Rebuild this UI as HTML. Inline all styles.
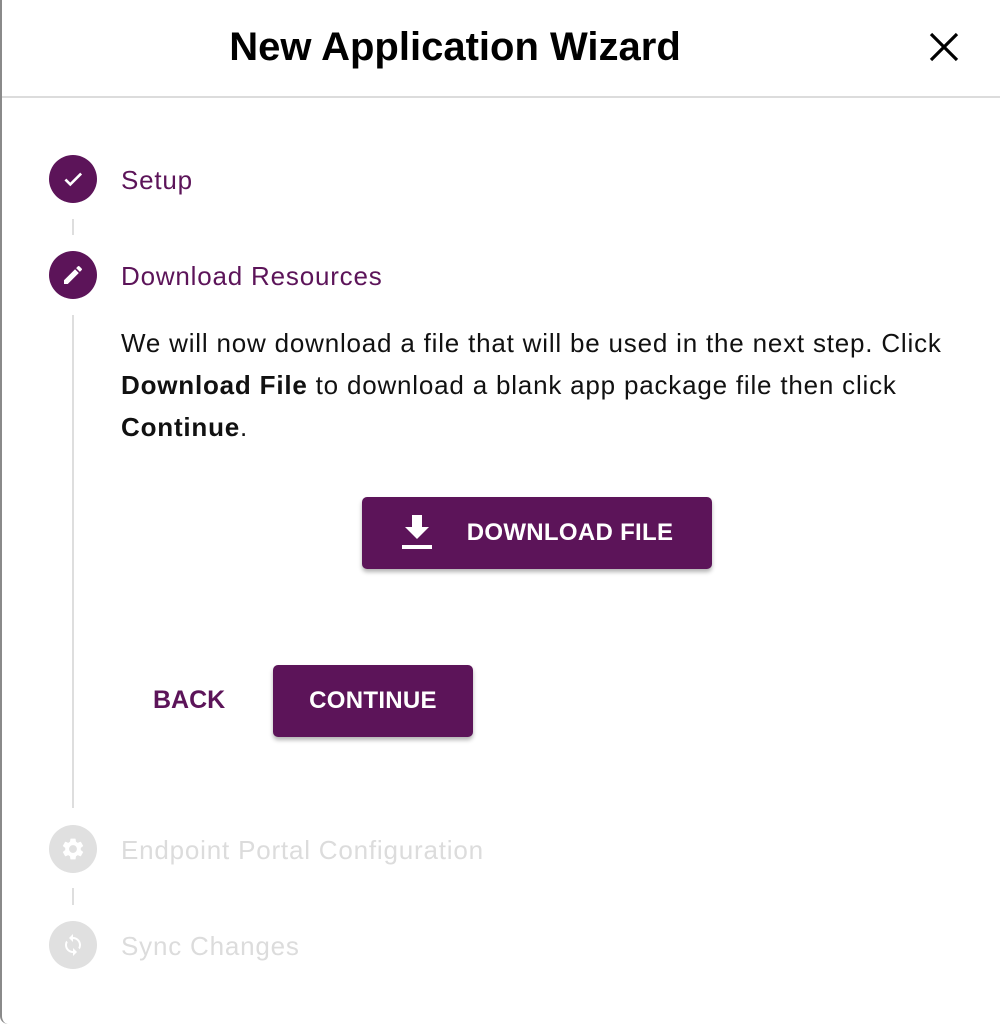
<!DOCTYPE html>
<html><head><style>
*{margin:0;padding:0;box-sizing:border-box}
body{width:1000px;height:1024px;background:#fff;font-family:"Liberation Sans",Roboto,sans-serif;position:relative;overflow:hidden}
.frame{position:absolute;left:0;top:0;width:1000px;height:1024px;border-left:2px solid #8a8a8a;border-bottom-left-radius:8px}
.title{position:absolute;left:0;width:910px;text-align:center;top:25px;font-size:40px;font-weight:bold;color:#000}
.hr{position:absolute;left:2px;right:0;top:96px;height:2px;background:#dcdcdc}
.circ{position:absolute;left:49px;width:48px;height:48px;border-radius:50%;background:#5c1459;display:flex;align-items:center;justify-content:center}
.circ.dis{background:#e0e0e0}
.lbl{position:absolute;left:121px;font-size:26px;letter-spacing:.8px;color:#5c1459}
.lbl.dis{color:#dcdcdc}
.vl{position:absolute;left:72px;width:2px;background:#dedede}
.txt{position:absolute;left:121px;top:322px;width:835px;font-size:26px;letter-spacing:.8px;line-height:42px;color:#111}
.btn{position:absolute;background:#5c1459;color:#fff;border-radius:5px;box-shadow:0 3px 4px rgba(0,0,0,.3);font-size:25px;font-weight:500;display:flex;align-items:center;justify-content:center;letter-spacing:.3px}
</style></head><body>
<div class="frame"></div>
<div class="title">New Application Wizard</div>
<svg style="position:absolute;left:929px;top:32px" width="30" height="30" viewBox="0 0 30 30"><path d="M2 2L28 28M28 2L2 28" stroke="#000" stroke-width="3.2"/></svg>
<div class="hr"></div>

<div class="circ" style="top:155px"><svg width="26" height="26" viewBox="0 0 24 24"><path d="M5 12.5l4.5 4.5L19.5 7" stroke="#fff" stroke-width="2.4" fill="none"/></svg></div>
<div class="lbl" style="top:165px">Setup</div>
<div class="vl" style="top:219px;height:16px"></div>

<div class="circ" style="top:251px"><svg width="24" height="24" viewBox="0 0 24 24"><path d="M3 17.25V21h3.75L17.81 9.94l-3.75-3.75L3 17.25zM20.71 7.04a1 1 0 000-1.41l-2.34-2.34a1 1 0 00-1.41 0l-1.83 1.83 3.75 3.75 1.83-1.83z" fill="#fff"/></svg></div>
<div class="lbl" style="top:261px">Download Resources</div>
<div class="vl" style="top:315px;height:493px"></div>

<div class="txt">We will now download a file that will be used in the next step. Click <b>Download File</b> to download a blank app package file then click <b>Continue</b>.</div>

<div class="btn" style="left:362px;top:497px;width:350px;height:72px;font-weight:bold;font-size:24px"><svg style="margin-right:34px" width="32" height="36" viewBox="0 0 32 36"><path d="M11 0h10v12h7L16 24 4 12h7z" fill="#fff"/><rect x="1" y="30" width="30" height="4" fill="#fff"/></svg>DOWNLOAD FILE</div>

<div style="position:absolute;left:153px;top:686px;font-size:25px;font-weight:bold;color:#5c1459">BACK</div>
<div class="btn" style="left:273px;top:665px;width:200px;height:72px;font-weight:bold;font-size:24px">CONTINUE</div>

<div class="circ dis" style="top:825px"><svg width="26" height="26" viewBox="0 0 24 24"><path fill="#fff" d="M19.14 12.94c.04-.3.06-.61.06-.94 0-.32-.02-.64-.07-.94l2.030-1.58a.49.49 0 00.12-.61l-1.92-3.32a.488.488 0 00-.59-.22l-2.39.96c-.5-.38-1.03-.7-1.62-.94l-.36-2.54a.484.484 0 00-.48-.41h-3.84c-.24 0-.43.17-.47.41l-.36 2.54c-.59.24-1.13.57-1.62.94l-2.39-.96c-.22-.08-.47 0-.59.22L2.74 8.87c-.12.21-.08.47.12.61l2.03 1.58c-.05.3-.09.63-.09.94s.02.64.07.94l-2.03 1.58a.49.49 0 00-.12.61l1.92 3.32c.12.22.37.29.59.22l2.39-.96c.5.38 1.03.7 1.62.94l.36 2.54c.05.24.24.41.48.41h3.84c.24 0 .44-.17.47-.41l.36-2.54c.59-.24 1.130-.56 1.62-.94l2.39.96c.22.08.47 0 .59-.22l1.92-3.32c.12-.22.07-.47-.12-.61l-2.01-1.58zM12 15.6c-1.98 0-3.6-1.62-3.6-3.6s1.62-3.6 3.6-3.6 3.6 1.62 3.6 3.6-1.62 3.6-3.6 3.6z"/></svg></div>
<div class="lbl dis" style="top:835px">Endpoint Portal Configuration</div>
<div class="vl" style="top:888px;height:17px"></div>

<div class="circ dis" style="top:921px"><svg width="24" height="24" viewBox="0 0 24 24"><path fill="#fff" d="M12 4V1L8 5l4 4V6c3.31 0 6 2.69 6 6 0 1.01-.25 1.970-.7 2.8l1.46 1.46A7.93 7.93 0 0020 12c0-4.42-3.58-8-8-8zm0 14c-3.31 0-6-2.69-6-6 0-1.01.25-1.97.7-2.8L5.24 7.74A7.93 7.93 0 004 12c0 4.42 3.58 8 8 8v3l4-4-4-4v3z"/></svg></div>
<div class="lbl dis" style="top:931px">Sync Changes</div>
</body></html>
